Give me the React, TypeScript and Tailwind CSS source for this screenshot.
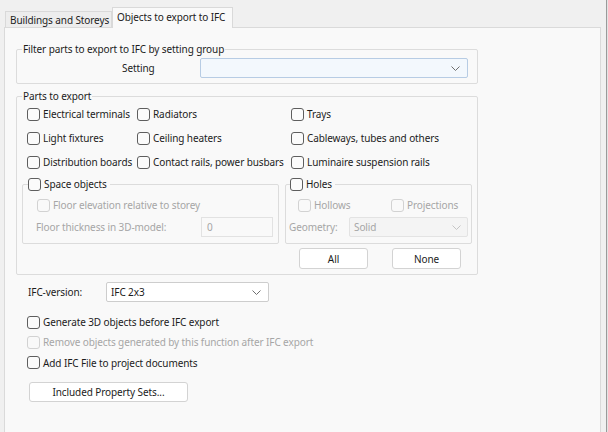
import React from "react";

function Cb({ label, disabled }: { label: string; disabled?: boolean }) {
  return (
    <span className="flex items-center gap-[3px] whitespace-nowrap">
      <span
        className={
          disabled
            ? "w-[13px] h-[13px] shrink-0 rounded-[3px] border border-[#d2d2d2] bg-[#f9f9f9]"
            : "w-[13px] h-[13px] shrink-0 rounded-[3px] border border-[#5e5e5e] bg-[#fbfbfb]"
        }
      />
      <span className={disabled ? "text-[#a6a6a6]" : "text-[#1c1c1c]"}>{label}</span>
    </span>
  );
}

function Chevron({ color }: { color: string }) {
  return (
    <svg width="9" height="5" viewBox="0 0 9 5" className="shrink-0">
      <path d="M0.5 0.5 L4.5 4.5 L8.5 0.5" fill="none" stroke={color} strokeWidth="1" />
    </svg>
  );
}

export default function App() {
  return (
    <div className="w-[608px] h-[432px] bg-[#f0f0f0] flex overflow-hidden font-['Noto_Sans','Liberation_Sans',sans-serif] text-[10px] leading-[14px] tracking-[-0.1px] text-[#1c1c1c]">
      <div className="w-[601px] shrink-0 flex flex-col pl-[4px]">
        {/* Tabs */}
        <div className="h-[27px] shrink-0 flex items-end pl-[1px] whitespace-nowrap">
          <div className="h-[16px] w-[107px] shrink-0 border border-b-0 border-[#d9d9d9] bg-[#ededed] flex items-center pl-[4px]">
            Buildings and Storeys
          </div>
          <div className="relative z-10 -mb-[1px] h-[21px] w-[121px] shrink-0 border border-b-0 border-[#d9d9d9] bg-[#f9f9f9] flex items-center pl-[4px] pb-[2px]">
            Objects to export to IFC
          </div>
        </div>
        {/* Pane */}
        <div className="h-[420px] shrink-0 border border-[#dadada] bg-[#f9f9f9] pl-[11px]">
          {/* Filter group */}
          <fieldset className="mt-[14px] w-[462px] border border-[#dcdcdc] rounded-[2px] pt-[2px] pb-[5px]">
            <legend className="ml-[5px] px-[1px] leading-[14px]">Filter parts to export to IFC by setting group</legend>
            <div className="flex items-center">
              <div className="w-[183px] pl-[105px]">Setting</div>
              <div className="w-[268px] h-[20px] bg-[#f3f8fd] border border-[#b7cce4] rounded-[2px] flex items-center justify-end pr-[7px]">
                <Chevron color="#6f6f6f" />
              </div>
            </div>
          </fieldset>

          {/* Parts group */}
          <fieldset className="mt-[5px] w-[462px] border border-[#dcdcdc] rounded-[2px] pb-[5px]">
            <legend className="ml-[5px] px-[1px] leading-[14px]">Parts to export</legend>
            <div className="grid grid-cols-[110px_154px_1fr] gap-y-[4px] pl-[10px] pt-[1px]">
              <div className="h-[20px] flex items-center"><Cb label="Electrical terminals" /></div>
              <div className="h-[20px] flex items-center"><Cb label="Radiators" /></div>
              <div className="h-[20px] flex items-center"><Cb label="Trays" /></div>
              <div className="h-[20px] flex items-center"><Cb label="Light fixtures" /></div>
              <div className="h-[20px] flex items-center"><Cb label="Ceiling heaters" /></div>
              <div className="h-[20px] flex items-center"><Cb label="Cableways, tubes and others" /></div>
              <div className="h-[20px] flex items-center"><Cb label="Distribution boards" /></div>
              <div className="h-[20px] flex items-center"><Cb label="Contact rails, power busbars" /></div>
              <div className="h-[20px] flex items-center"><Cb label="Luminaire suspension rails" /></div>
            </div>

            <div className="mt-[5px] flex items-start gap-[6px] pl-[5px]">
              {/* Space objects */}
              <fieldset className="w-[257px] border border-[#dcdcdc] rounded-[2px] pb-[6px]">
                <legend className="ml-[5px] pr-[3px] leading-[14px]">
                  <Cb label="Space objects" />
                </legend>
                <div className="mt-[6px] h-[16px] flex items-center pl-[14px]">
                  <Cb label="Floor elevation relative to storey" disabled />
                </div>
                <div className="mt-[4px] flex items-center pl-[13px]">
                  <div className="w-[165px] text-[#a6a6a6]">Floor thickness in 3D-model:</div>
                  <div className="w-[72px] h-[20px] border border-[#e2e2e2] bg-[#f9f9f9] flex items-center pl-[5px] text-[#a6a6a6]">
                    0
                  </div>
                </div>
              </fieldset>

              {/* Holes */}
              <div className="flex flex-col">
                <fieldset className="w-[187px] border border-[#dcdcdc] rounded-[2px] pb-[6px]">
                  <legend className="ml-[4px] pr-[3px] leading-[14px]">
                    <Cb label="Holes" />
                  </legend>
                  <div className="mt-[6px] h-[16px] flex items-center pl-[12px]">
                    <div className="w-[93px]"><Cb label="Hollows" disabled /></div>
                    <Cb label="Projections" disabled />
                  </div>
                  <div className="mt-[4px] flex items-center pl-[3px]">
                    <div className="w-[60px] text-[#a6a6a6]">Geometry:</div>
                    <div className="w-[119px] h-[20px] border border-[#e3e3e3] bg-[#f4f4f4] rounded-[2px] flex items-center justify-between pl-[4px] pr-[6px] text-[#a6a6a6]">
                      <span>Solid</span>
                      <Chevron color="#c4c4c4" />
                    </div>
                  </div>
                </fieldset>
                <div className="mt-[4px] ml-[14px] flex gap-[24px]">
                  <button className="w-[69px] h-[21px] bg-white border border-[#d3d3d3] rounded-[3px] flex items-center justify-center text-[#1c1c1c]">
                    All
                  </button>
                  <button className="w-[69px] h-[21px] bg-white border border-[#d3d3d3] rounded-[3px] flex items-center justify-center text-[#1c1c1c]">
                    None
                  </button>
                </div>
              </div>
            </div>
          </fieldset>

          {/* IFC version */}
          <div className="mt-[7px] ml-[12px] flex items-center">
            <div className="w-[78px]">IFC-version:</div>
            <div className="w-[163px] h-[20px] bg-white border border-[#cdcdcd] rounded-[2px] flex items-center justify-between pl-[4px] pr-[7px]">
              <span>IFC 2x3</span>
              <Chevron color="#6f6f6f" />
            </div>
          </div>

          <div className="mt-[10px] ml-[11px] flex flex-col">
            <div className="h-[20px] flex items-center"><Cb label="Generate 3D objects before IFC export" /></div>
            <div className="h-[20px] flex items-center"><Cb label="Remove objects generated by this function after IFC export" disabled /></div>
            <div className="h-[21px] flex items-center"><Cb label="Add IFC File to project documents" /></div>
          </div>

          <button className="mt-[9px] ml-[13px] w-[159px] h-[20px] bg-white border border-[#d3d3d3] rounded-[3px] flex items-center justify-center text-[#1c1c1c]">
            Included Property Sets...
          </button>
        </div>
      </div>
      <div className="w-[5px] shrink-0" />
      <div className="w-[1px] shrink-0 bg-[#9a9a9a]" />
      <div className="w-[1px] shrink-0 bg-[#e4e4e4]" />
    </div>
  );
}
